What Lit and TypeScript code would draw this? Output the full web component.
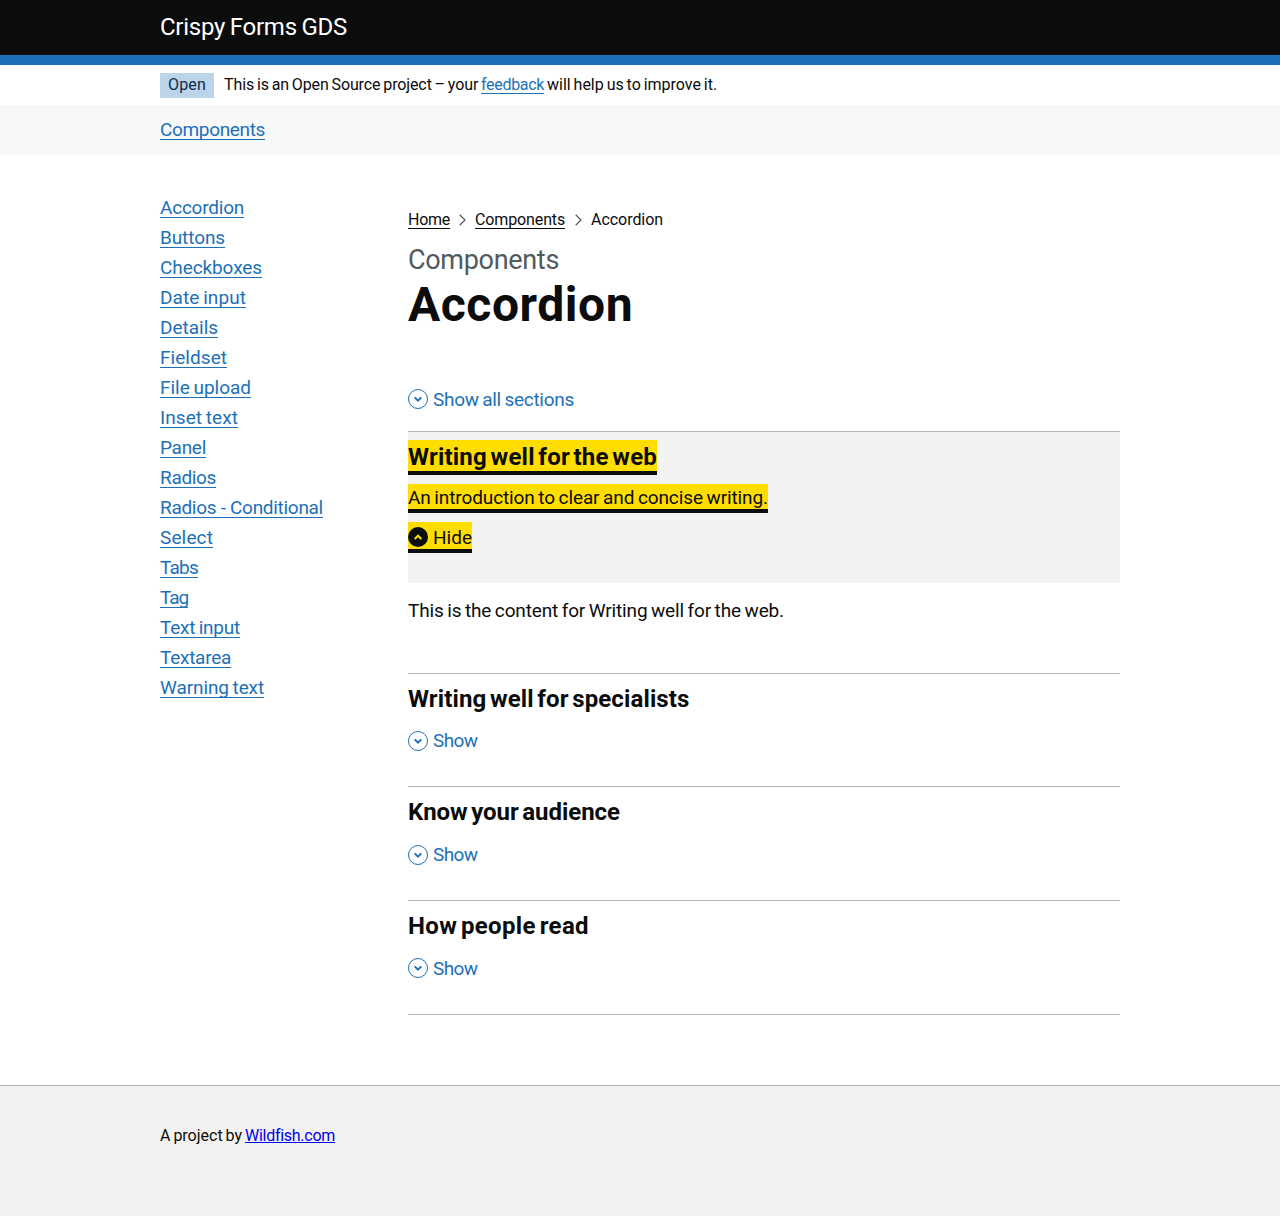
import { LitElement, html, css, svg } from "lit";
import { customElement, property } from "lit/decorators.js";
import { styleMap } from "lit/directives/style-map.js";

type Label = [text: string, adjust: number, word?: number];

/** Text whose tracking is derived from a total width adjustment in pixels. */
const label = ([text, adjust, word = 1]: Label) => {
  const spaces = text.split(" ").length - 1;
  const tracking = (adjust + spaces * word) / text.length;
  return html`<span
    style=${styleMap({ letterSpacing: `${tracking.toFixed(3)}px`, wordSpacing: `${-word}px` })}
    >${text}</span
  >`;
};

const sideLinks: Label[] = [
  ["Accordion", -2],
  ["Buttons", -0.7],
  ["Checkboxes", -0.9],
  ["Date input", -0.3],
  ["Details", -0.1],
  ["Fieldset", 0.4],
  ["File upload", -1.2],
  ["Inset text", -0.4],
  ["Panel", -1.4],
  ["Radios", -2],
  ["Radios - Conditional", -5.9, 0],
  ["Select", 0.8],
  ["Tabs", -3.1],
  ["Tag", -3.3],
  ["Text input", -3.3],
  ["Textarea", -2.1],
  ["Warning text", -2.2],
];

const sections: { title: Label; cls: string }[] = [
  { title: ["Writing well for specialists", -4.1, 2.5], cls: "first" },
  { title: ["Know your audience", -5.4, 2.5], cls: "middle" },
  { title: ["How people read", 0.2, 2.5], cls: "last" },
];

@customElement("chevron-icon")
class ChevronIcon extends LitElement {
  @property({ type: Boolean }) open = false;

  static styles = css`
    :host {
      display: block;
      width: 20px;
      height: 20px;
      flex: none;
    }
    svg {
      display: block;
    }
  `;

  render() {
    return html`<svg width="20" height="20" viewBox="0 0 20 20" fill="none">
      ${this.open
        ? svg`<circle cx="10" cy="10" r="10" fill="#0b0c0c"/><path d="M6.7 12 10 8.7 13.3 12" stroke="#ffdd00" stroke-width="2"/>`
        : svg`<circle cx="10" cy="10" r="9.5" stroke="#1d70b8"/><path d="M6.7 8.4 10 11.7 13.3 8.4" stroke="#1d70b8" stroke-width="2"/>`}
    </svg>`;
  }
}

@customElement("app-root")
class AppRoot extends LitElement {
  static styles = css`
    :host {
      display: flex;
      flex-direction: column;
      min-height: 1216px;
      background: #fff;
      color: #0b0c0c;
      font-family: Roboto, "Liberation Sans", sans-serif;
      font-size: 19px;
      line-height: 25px;
      white-space: pre;
    }
    * {
      box-sizing: border-box;
    }
    h1, h2, p, ul, ol {
      margin: 0;
      padding: 0;
      list-style: none;
    }
    .wrap {
      width: 960px;
      margin: 0 auto;
    }
    a {
      color: #1d70b8;
      text-decoration: underline;
      text-decoration-thickness: 1px;
      text-underline-offset: 3px;
      text-decoration-skip-ink: none;
    }
    .header {
      height: 65px;
      padding-top: 12px;
      background: #0b0c0c;
      border-bottom: 10px solid #1d70b8;
      color: #fff;
      font-size: 24px;
      line-height: 30px;
    }
    .phase {
      display: flex;
      height: 40px;
      padding-top: 8px;
      gap: 10px;
      font-size: 16px;
      line-height: 20px;
    }
    .phase p {
      padding-top: 2px;
    }
    .tag {
      width: 54px;
      height: 25px;
      padding: 2px 8px;
      background: #bbd4ea;
      color: #0c2d4a;
    }
    .nav {
      height: 50px;
      padding-top: 12px;
      background: #f8f8f8;
    }
    .main {
      display: grid;
      grid-template-columns: 248px 712px;
      height: 930px;
      padding-top: 40px;
    }
    .side {
      display: flex;
      flex-direction: column;
      gap: 5px;
    }
    .crumbs {
      display: flex;
      align-items: center;
      padding-top: 15px;
      font-size: 16px;
      line-height: 20px;
    }
    .crumbs svg {
      margin: 0 9px;
    }
    .crumbs li + svg ~ li + svg {
      margin-left: 10px;
    }
    .crumbs a {
      color: #0b0c0c;
    }
    .caption {
      margin-top: 15px;
      color: #505a5f;
      font-size: 27px;
      line-height: 30px;
    }
    h1 {
      margin-top: 5px;
      font-size: 48px;
      line-height: 50px;
    }
    .toggle {
      display: flex;
      width: fit-content;
      gap: 5px;
      color: #1d70b8;
    }
    .all {
      margin-top: 57px;
      height: 44px;
    }
    .all chevron-icon {
      margin-top: 2px;
    }
    h2 {
      font-size: 24px;
      line-height: 30px;
    }
    .open {
      height: 152px;
      padding-top: 8px;
      border-top: 1px solid #b1b4b6;
      background: #f3f2f1;
    }
    .hl {
      width: fit-content;
      background: #fd0;
      border-bottom: 4px solid #0b0c0c;
      color: #0b0c0c;
    }
    .hl-title {
      height: 35px;
      padding-top: 2px;
    }
    .hl-summary {
      height: 29px;
      margin-top: 9px;
      padding-top: 1px;
    }
    .hl-toggle {
      height: 31px;
      margin-top: 9px;
      padding-top: 3px;
    }
    .hl-toggle chevron-icon {
      margin-top: 2px;
    }
    .content {
      height: 90px;
      padding-top: 15px;
    }
    .section {
      height: 114px;
      padding-top: 10px;
      border-top: 1px solid #b1b4b6;
    }
    .section .toggle {
      margin-top: 15px;
    }
    .section chevron-icon {
      margin-top: 3px;
    }
    .first {
      height: 113px;
    }
    .section.first .toggle {
      margin-top: 14px;
    }
    .last {
      height: 115px;
      border-bottom: 1px solid #b1b4b6;
    }
    .section.last chevron-icon {
      margin-top: 2px;
    }
    .footer {
      flex: 1;
      padding-top: 40px;
      background: #f3f2f1;
      border-top: 1px solid #b1b4b6;
      font-size: 16px;
      line-height: 20px;
    }
    .footer a {
      color: #00e;
      text-underline-offset: 1px;
    }
  `;

  private separator() {
    return html`<svg width="7" height="12" viewBox="0 0 7 12" fill="none"><path d="M.7.8 6 6 .7 11.2" stroke="#505a5f" stroke-width="1.2"/></svg>`;
  }

  render() {
    return html`<header class="header"><div class="wrap">${label(["Crispy Forms GDS", -6.2])}</div></header
      ><div class="phase wrap"><span class="tag">${label(["Open", 0.7])}</span><p>${label(["This is an Open Source project – your ", -12.4])}<a>${label(["feedback", -2.5])}</a>${label([" will help us to improve it.", -6.6])}</p></div
      ><nav class="nav"><div class="wrap"><a>${label(["Components", -3.45])}</a></div></nav
      ><div class="main wrap"
        ><ul class="side">${sideLinks.map((l) => html`<li><a>${label(l)}</a></li>`)}</ul
        ><main
          ><ol class="crumbs"><li><a>${label(["Home", -1])}</a></li>${this.separator()}<li><a>${label(["Components", -1.3])}</a></li>${this.separator()}<li>${label(["Accordion", -0.5])}</li></ol
          ><p class="caption">${label(["Components", -3.1])}</p
          ><h1>${label(["Accordion", 5])}</h1
          ><div class="toggle all"><chevron-icon></chevron-icon>${label(["Show all sections", -6.7])}</div
          ><section class="open"
            ><h2 class="hl hl-title">${label(["Writing well for the web", -5.2, 2.5])}</h2
            ><p class="hl hl-summary">${label(["An introduction to clear and concise writing.", -10.8])}</p
            ><div class="toggle hl hl-toggle"><chevron-icon open></chevron-icon>${label(["Hide", 0])}</div
          ></section
          ><p class="content">${label(["This is the content for Writing well for the web.", -16])}</p
          >${sections.map(
            (s) => html`<section class="section ${s.cls}"><h2>${label(s.title)}</h2><div class="toggle"><chevron-icon></chevron-icon>${label(["Show", -2.6])}</div></section>`,
          )}</main
      ></div
      ><footer class="footer"><div class="wrap">${label(["A project by ", -3.1])}<a>${label(["Wildfish.com", -3.3])}</a></div></footer>`;
  }
}
